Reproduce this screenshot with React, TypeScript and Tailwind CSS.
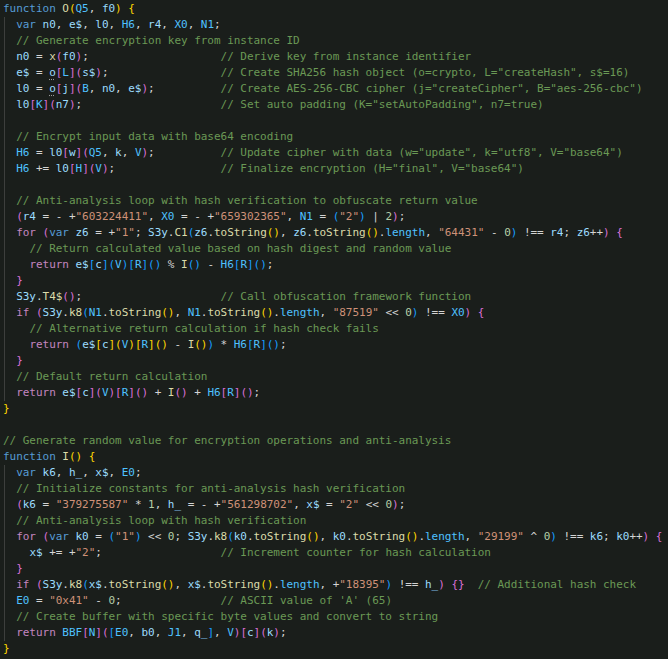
const c = (code: string, comment: string) => code.padEnd(33) + '// ' + comment;

const lines: string[] = [
  'function O(Q5, f0) {',
  '  var n0, e$, l0, H6, r4, X0, N1;',
  '  // Generate encryption key from instance ID',
  c('  n0 = x(f0);', 'Derive key from instance identifier'),
  c('  e$ = o[L](s$);', 'Create SHA256 hash object (o=crypto, L="createHash", s$=16)'),
  c('  l0 = o[j](B, n0, e$);', 'Create AES-256-CBC cipher (j="createCipher", B="aes-256-cbc")'),
  c('  l0[K](n7);', 'Set auto padding (K="setAutoPadding", n7=true)'),
  '',
  '  // Encrypt input data with base64 encoding',
  c('  H6 = l0[w](Q5, k, V);', 'Update cipher with data (w="update", k="utf8", V="base64")'),
  c('  H6 += l0[H](V);', 'Finalize encryption (H="final", V="base64")'),
  '',
  '  // Anti-analysis loop with hash verification to obfuscate return value',
  '  (r4 = - +"603224411", X0 = - +"659302365", N1 = ("2") | 2);',
  '  for (var z6 = +"1"; S3y.C1(z6.toString(), z6.toString().length, "64431" - 0) !== r4; z6++) {',
  '    // Return calculated value based on hash digest and random value',
  '    return e$[c](V)[R]() % I() - H6[R]();',
  '  }',
  c('  S3y.T4$();', 'Call obfuscation framework function'),
  '  if (S3y.k8(N1.toString(), N1.toString().length, "87519" << 0) !== X0) {',
  '    // Alternative return calculation if hash check fails',
  '    return (e$[c](V)[R]() - I()) * H6[R]();',
  '  }',
  '  // Default return calculation',
  '  return e$[c](V)[R]() + I() + H6[R]();',
  '}',
  '',
  '// Generate random value for encryption operations and anti-analysis',
  'function I() {',
  '  var k6, h_, x$, E0;',
  '  // Initialize constants for anti-analysis hash verification',
  '  (k6 = "379275587" * 1, h_ = - +"561298702", x$ = "2" << 0);',
  '  // Anti-analysis loop with hash verification',
  '  for (var k0 = ("1") << 0; S3y.k8(k0.toString(), k0.toString().length, "29199" ^ 0) !== k6; k0++) {',
  c('    x$ += +"2";', 'Increment counter for hash calculation'),
  '  }',
  '  if (S3y.k8(x$.toString(), x$.toString().length, +"18395") !== h_) {}  // Additional hash check',
  c('  E0 = "0x41" - 0;', "ASCII value of 'A' (65)"),
  '  // Create buffer with specific byte values and convert to string',
  '  return BBF[N]([E0, b0, J1, q_], V)[c](k);',
  '}',
];

const BRACKETS = ['text-[#ffd700]', 'text-[#da70d6]', 'text-[#179fff]'];

type Tok = { text: string; cls: string };

function tokenize(src: string[]): Tok[][] {
  let depth = 0;
  const re = /(\/\/.*$)|("[^"]*"|'[^']*')|(\d+)|([A-Za-z_$][\w$]*)|([()[\]{}])|(\s+)|(.)/g;
  return src.map((line) => {
    const out: Tok[] = [];
    let prevWord = '';
    let m: RegExpExecArray | null;
    re.lastIndex = 0;
    while ((m = re.exec(line)) !== null) {
      const [t, cm, str, num, id, br, ws] = m;
      if (cm) out.push({ text: t, cls: 'text-[#6a9955]' });
      else if (str) out.push({ text: t, cls: 'text-[#ce9178]' });
      else if (num) out.push({ text: t, cls: 'text-[#b5cea8]' });
      else if (id) {
        const next = line.slice(re.lastIndex).match(/^\s*(.)/)?.[1];
        let cls = 'text-[#9cdcfe]';
        if (id === 'function' || id === 'var') cls = 'text-[#569cd6]';
        else if (id === 'for' || id === 'if' || id === 'return') cls = 'text-[#c586c0]';
        else if (prevWord === 'function' || next === '(') cls = 'text-[#dcdcaa]';
        else if (id === 'length' || /^[A-Z][A-Z0-9_$]*$/.test(id)) cls = 'text-[#4fc1ff]';
        if (id === 'o') cls += ' underline decoration-dotted decoration-[#9a9a9a] underline-offset-[3px]';
        out.push({ text: t, cls });
        prevWord = id;
      } else if (br) {
        if ('([{'.includes(br)) {
          out.push({ text: t, cls: BRACKETS[depth % 3] });
          depth++;
        } else {
          depth--;
          out.push({ text: t, cls: BRACKETS[depth % 3] });
        }
      } else if (ws) out.push({ text: t, cls: '' });
      else out.push({ text: t, cls: 'text-[#d4d4d4]' });
    }
    return out;
  });
}

const tokens = tokenize(lines);

// indent guide sits inside both function bodies
const hasGuide = (i: number) => (i >= 1 && i <= 24) || (i >= 29 && i <= 39);

export default function App() {
  return (
    <div className="w-full min-h-screen bg-[#1a1e1b] overflow-hidden pt-[1px]">
      <div className="font-['DejaVu_Sans_Mono',monospace] text-[11px] tracking-[-0.03px] leading-4 whitespace-pre">
        {tokens.map((toks, i) => (
          <div
            key={i}
            className={
              hasGuide(i)
                ? 'h-4 pl-[3px] bg-[linear-gradient(to_right,transparent_4px,#3d3f3d_4px,#3d3f3d_5px,transparent_5px)]'
                : 'h-4 pl-[3px]'
            }
          >
            {toks.map((t, j) => (
              <span key={j} className={t.cls}>
                {t.text}
              </span>
            ))}
          </div>
        ))}
      </div>
    </div>
  );
}
